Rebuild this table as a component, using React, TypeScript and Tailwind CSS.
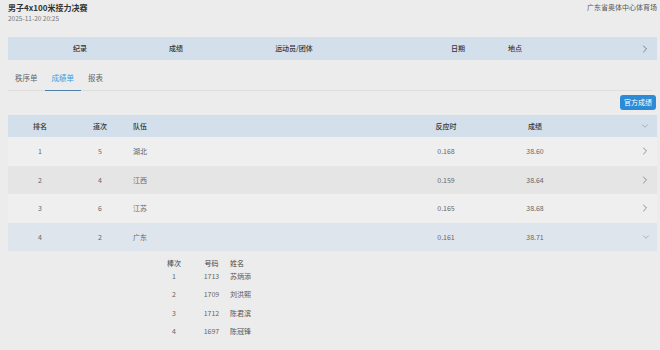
import React from "react";
import { ChevronRight, ChevronDown } from "lucide-react";

const rows = [
  { rank: "1", lane: "5", team: "湖北", rt: "0.168", res: "38.60", bg: "bg-[#efefef]", open: false },
  { rank: "2", lane: "4", team: "江西", rt: "0.159", res: "38.64", bg: "bg-[#e5e5e5]", open: false },
  { rank: "3", lane: "6", team: "江苏", rt: "0.165", res: "38.68", bg: "bg-[#efefef]", open: false },
  { rank: "4", lane: "2", team: "广东", rt: "0.161", res: "38.71", bg: "bg-[#dfe5ed]", open: true },
];

const members = [
  { leg: "1", bib: "1713", name: "苏炳添" },
  { leg: "2", bib: "1709", name: "刘洪熙" },
  { leg: "3", bib: "1712", name: "陈君滨" },
  { leg: "4", bib: "1697", name: "陈冠锋" },
];

export default function App() {
  return (
    <div className="w-[660px] h-[350px] overflow-hidden bg-[#ececec] font-['Noto_Sans_CJK_SC','Noto_Sans',sans-serif]">
      {/* title row */}
      <div className="flex justify-between pl-[8px] pr-[3px] pt-[2px]">
        <div>
          <div className="text-[8px] font-bold text-[#333] leading-[11px]">男子4x100米接力决赛</div>
          <div className="text-[6.5px] text-[#777] leading-[11px]">2025-11-20 20:25</div>
        </div>
        <div className="text-[7px] text-[#555] leading-[11px]">广东省奥体中心体育场</div>
      </div>

      {/* info bar */}
      <div className="mx-[8px] mt-[13px] h-[23px] w-[649px] bg-[#d3dfeb] flex items-center text-[7px] text-[#333] font-medium">
        <div className="w-[144px] text-center">纪录</div>
        <div className="w-[48px] text-center">成绩</div>
        <div className="w-[188px] text-center">运动员/团体</div>
        <div className="ml-[44px] w-[52px] text-center">日期</div>
        <div className="w-[62px] text-center">地点</div>
        <div className="flex-1 flex justify-end pr-[6px]">
          <ChevronRight size={12} strokeWidth={1.4} className="text-[#555]" />
        </div>
      </div>

      {/* tabs */}
      <div className="mx-[8px] mt-[5px] h-[26px] border-b border-[#dedede] flex text-[7.5px]">
        <div className="px-[7px] flex items-center text-[#666]">秩序单</div>
        <div className="px-[7px] flex items-center text-[#3a9ae0] border-b-[1.5px] border-[#4a7fae] mb-[-1px]">成绩单</div>
        <div className="px-[7px] flex items-center text-[#666]">报表</div>
      </div>

      {/* button */}
      <div className="flex justify-end pr-[4px] mt-[4px]">
        <div className="h-[15px] px-[4px] rounded-[3px] bg-[#2b8bd6] text-white text-[7px] flex items-center">官方成绩</div>
      </div>

      {/* table */}
      <div className="mx-[8px] mt-[5px] w-[649px]">
        <div className="h-[22px] bg-[#d3dfeb] flex items-center text-[7px] text-[#333] font-medium">
          <div className="w-[64px] text-center">排名</div>
          <div className="w-[56px] text-center">道次</div>
          <div className="w-[288px] pl-[5px]">队伍</div>
          <div className="w-[60px] text-center">反应时</div>
          <div className="w-[118px] text-center">成绩</div>
          <div className="flex-1 flex justify-end pr-[7px]">
            <ChevronDown size={10} strokeWidth={1.4} className="text-[#888]" />
          </div>
        </div>
        {rows.map((r) => (
          <div key={r.rank} className={`h-[28.5px] ${r.bg} flex items-center text-[7px] text-[#666]`}>
            <div className="w-[64px] text-center">{r.rank}</div>
            <div className="w-[56px] text-center">{r.lane}</div>
            <div className="w-[288px] pl-[5px]">{r.team}</div>
            <div className="w-[60px] text-center">{r.rt}</div>
            <div className="w-[118px] text-center">{r.res}</div>
            <div className="flex-1 flex justify-end pr-[6px]">
              {r.open ? (
                <ChevronDown size={10} strokeWidth={1.4} className="text-[#888]" />
              ) : (
                <ChevronRight size={12} strokeWidth={1.4} className="text-[#666]" />
              )}
            </div>
          </div>
        ))}

        {/* members sub-table */}
        <div className="pt-[6px] pl-[147px] text-[7px]">
          <div className="h-[12px] flex items-center text-[#444]">
            <div className="w-[38px] text-center">棒次</div>
            <div className="w-[37px] text-center">号码</div>
            <div>姓名</div>
          </div>
          <div className="mt-[-2px]">
            {members.map((m) => (
              <div key={m.leg} className="h-[18.33px] flex items-center text-[#666]">
                <div className="w-[38px] text-center">{m.leg}</div>
                <div className="w-[37px] text-center">{m.bib}</div>
                <div className="text-[#555]">{m.name}</div>
              </div>
            ))}
          </div>
        </div>
      </div>
    </div>
  );
}
